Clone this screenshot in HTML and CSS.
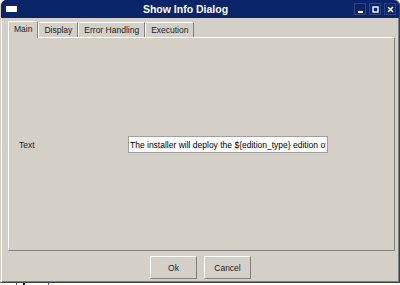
FILE: index.html
```html
<!DOCTYPE html>
<html lang="en">
<head>
  <meta charset="UTF-8">
  <title>Show Info Dialog</title>
  <link rel="stylesheet" href="styles.css">
</head>
<body>

  <div class="window">
    <div class="titlebar">
      <span class="menu-icon"></span>
      <span class="title">Show Info Dialog</span>
      <div class="controls">
        <span class="ctl">
          <svg width="9" height="9" viewBox="0 0 9 9"><rect x="2" y="6" width="5" height="2" fill="#fff"/></svg>
        </span>
        <span class="ctl">
          <svg width="9" height="9" viewBox="0 0 9 9"><rect x="2" y="2" width="5" height="5" fill="none" stroke="#fff" stroke-width="1.4"/></svg>
        </span>
        <span class="ctl">
          <svg width="9" height="9" viewBox="0 0 9 9"><path d="M2 2 L7 7 M7 2 L2 7" stroke="#fff" stroke-width="1.6"/></svg>
        </span>
      </div>
    </div>

    <div class="body">
      <div class="tabs">
        <div class="tab active">Main</div>
        <div class="tab">Display</div>
        <div class="tab">Error Handling</div>
        <div class="tab">Execution</div>
      </div>
      <div class="panel">
        <div class="row">
          <label class="label">Text</label>
          <input class="field" type="text" value="The installer will deploy the ${edition_type} edition of the product">
        </div>
      </div>
      <div class="buttons">
        <button class="btn">Ok</button>
        <button class="btn">Cancel</button>
      </div>
    </div>
  </div>
  <div class="below">
    <span class="mark m1"></span>
    <span class="mark m2"></span>
    <span class="mark m3"></span>
  </div>

</body>
</html>
```

FILE: styles.css
```css
html, body {
  margin: 0;
  padding: 0;
  background: #fff;
}

body {
  width: 400px;
  height: 285px;
  overflow: hidden;
  font-family: "Liberation Sans", Arial, sans-serif;
  font-size: 8.5px;
  color: #000;
}

.window {
  width: 400px;
  height: 283px;
  box-sizing: border-box;
  background: #d4d0c8;
  border-left: 1px solid #d4d0c8;
  border-right: 1px solid #404040;
  border-bottom: 1px solid #404040;
  box-shadow: inset 1px 0 0 #fff, inset -1px -1px 0 #808080;
  display: flex;
  flex-direction: column;
  border-radius: 5px 5px 0 0;
  overflow: hidden;
}

.titlebar {
  height: 18px;
  flex: none;
  background: #0a246a;
  display: flex;
  align-items: center;
  border-radius: 5px 5px 0 0;
}

.menu-icon {
  width: 11px;
  height: 6px;
  background: #fff;
  margin-left: 5px;
  margin-top: -1px;
}

.title {
  flex: 1;
  text-align: center;
  color: #fff;
  font-weight: bold;
  font-size: 10.5px;
}

.controls {
  display: flex;
  gap: 3px;
  margin-right: 3px;
}

.ctl {
  width: 12px;
  height: 12px;
  display: flex;
  align-items: center;
  justify-content: center;
  border: 1px solid #2c4684;
  box-sizing: border-box;
}

.body {
  flex: 1;
  display: flex;
  flex-direction: column;
  padding: 2px 4px 0 7px;
  box-shadow: inset 1px 0 0 #fff;
}

.tabs {
  display: flex;
  height: 17px;
  align-items: flex-end;
  position: relative;
  z-index: 1;
}

.tab {
  height: 15px;
  line-height: 15px;
  padding: 0 5px;
  border: 1px solid #fff;
  border-right-color: #808080;
  border-bottom: none;
  box-sizing: border-box;
  background: #d4d0c8;
  color: #222;
}

.tab.active {
  height: 17px;
  line-height: 14px;
  margin-bottom: -1px;
}

.panel {
  height: 214px;
  box-sizing: border-box;
  border: 1px solid #fff;
  border-right-color: #808080;
  border-bottom-color: #808080;
  display: flex;
  align-items: center;
}

.row {
  display: flex;
  align-items: center;
  width: 100%;
  margin-top: 1px;
}

.label {
  width: 109px;
  padding-left: 10px;
  color: #222;
}

.field {
  width: 200px;
  height: 17px;
  box-sizing: border-box;
  border: 1px solid #a0a0a0;
  background: #fff;
  font-family: "Liberation Sans", Arial, sans-serif;
  font-size: 8.5px;
  padding: 0 1px;
  margin: 0;
  outline: none;
}

.buttons {
  display: flex;
  justify-content: center;
  gap: 7px;
  margin-top: 5px;
  margin-right: 2px;
}

.btn {
  width: 47px;
  height: 23px;
  box-sizing: border-box;
  background: #d4d0c8;
  border: 1px solid #fff;
  border-right-color: #808080;
  border-bottom-color: #808080;
  font-family: "Liberation Sans", Arial, sans-serif;
  font-size: 8.5px;
  color: #222;
  padding: 0;
}

.below {
  height: 2px;
  position: relative;
  background: #fff;
}

.mark {
  position: absolute;
  top: 0;
  width: 1px;
  height: 2px;
  background: #5050c0;
}

.m1 { left: 16px; }
.m2 { left: 23px; background: #000060; width: 2px; }
.m3 { left: 48px; }
```
